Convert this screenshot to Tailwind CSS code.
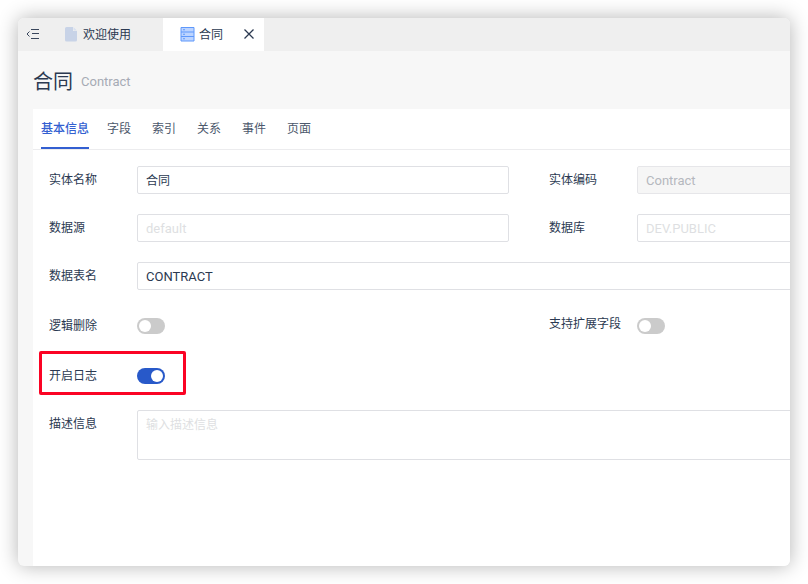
<!DOCTYPE html>
<html lang="zh-CN">
<head>
<meta charset="utf-8">
<title>合同</title>
<script src="https://cdn.jsdelivr.net/npm/@tailwindcss/browser@4"></script>
</head>
<body class="flex h-screen overflow-hidden bg-white p-[18px] font-['Roboto','Noto_Sans_CJK_SC',sans-serif] text-xs text-[#2b3951]">
<main class="flex min-w-0 flex-1 flex-col overflow-hidden rounded-md bg-[#f7f7f7] shadow-[0_0_20px_rgba(0,0,0,0.3)]">
  <header class="flex h-[33px] shrink-0 items-stretch bg-[#efefef]">
    <button aria-label="收起菜单" class="flex w-[30px] items-center pl-2">
      <svg class="h-[13px] w-[14px]" viewBox="0 0 14 13" fill="none" stroke="#39465c"><path d="M3.500 3.500 1 6l2.500 2.500M5 1.500h8M6 5.500h7M5 10.500h8"/></svg>
    </button>
    <button class="flex w-[115px] items-center gap-[6px] pl-[17px]">
      <svg class="h-[15px] w-3" viewBox="0 0 12 15"><path fill="#c8d3e7" d="M1.500 0H8v4h4v9a1.500 1.500 0 0 1-1.500 1.500h-9A1.500 1.500 0 0 1 0 13v-11.500A1.500 1.500 0 0 1 1.500 0z"/><path fill="#d9e1ef" d="M8.500 0 12 3.500H8.500z"/></svg>
      <span>欢迎使用</span>
    </button>
    <div class="flex w-[101px] items-center bg-white pl-[17px]">
      <button class="flex items-center gap-1">
        <svg class="h-[15px] w-[15px]" viewBox="0 0 15 15"><path fill="#bcd4ff" stroke="#5e98fb" d="M1 .5h13v13.500H1zM1 5h13M1 9.500h13"/><path fill="none" stroke="#5e98fb" d="M3 2.750h2M3 7.250h2M3 11.750h2"/></svg>
        <span>合同</span>
      </button>
      <button aria-label="关闭" class="ml-5">
        <svg class="h-[13px] w-3" viewBox="0 0 12 13" fill="none" stroke="#2b3951" stroke-width="1.300"><path d="m1.500 1.500 9 9m0-9-9 9"/></svg>
      </button>
    </div>
  </header>
  <div class="flex h-[58px] shrink-0 items-center gap-2 pt-1 pl-[15px]">
    <h1 class="text-xl">合同</h1>
    <span class="text-[13px] text-[#a6abb5]">Contract</span>
  </div>
  <section class="ml-[15px] flex-1 overflow-hidden bg-white">
    <nav class="flex h-[41px] items-stretch border-b border-[#ececee] pl-2 text-[#4c586c]">
      <button class="mr-[18px] border-b-2 border-[#335fd1] pt-[2px] font-medium text-[#335fd1]">基本信息</button>
      <button class="w-[45px] text-left">字段</button>
      <button class="w-[45px] text-left">索引</button>
      <button class="w-[45px] text-left">关系</button>
      <button class="w-[45px] text-left">事件</button>
      <button class="w-[45px] text-left">页面</button>
    </nav>
    <form class="grid min-w-[992px] grid-cols-2 gap-x-10 gap-y-5 p-4 leading-7">
      <div class="flex">
        <label for="name" class="w-[88px] shrink-0">实体名称</label>
        <input id="name" value="合同" class="h-7 min-w-0 flex-1 rounded-xs border border-[#dfe0e4] px-2 pt-[2px]">
      </div>
      <div class="flex">
        <label for="code" class="w-[88px] shrink-0">实体编码</label>
        <input id="code" value="Contract" disabled class="h-7 min-w-0 flex-1 rounded-xs border border-[#e6e6e9] bg-[#f6f6f6] px-2 pt-[2px] text-[13px] text-[#b5b8be]">
      </div>
      <div class="flex">
        <label for="source" class="w-[88px] shrink-0">数据源</label>
        <input id="source" placeholder="default" class="h-7 min-w-0 flex-1 rounded-xs border border-[#dfe0e4] px-2 pt-[2px] text-[13px] placeholder:text-[#dedfe2]">
      </div>
      <div class="flex">
        <label for="database" class="w-[88px] shrink-0">数据库</label>
        <input id="database" placeholder="DEV.PUBLIC" class="h-7 min-w-0 flex-1 rounded-xs border border-[#dfe0e4] px-2 pt-[2px] text-[13px] placeholder:text-[#dedfe2]">
      </div>
      <div class="col-span-2 flex">
        <label for="table" class="w-[88px] shrink-0">数据表名</label>
        <input id="table" value="CONTRACT" class="h-7 min-w-0 flex-1 rounded-xs border border-[#dfe0e4] px-2 pt-[2px] text-[13px]">
      </div>
      <div class="flex h-[30px] items-center pt-[2px]">
        <label for="soft-delete" class="w-[88px] shrink-0">逻辑删除</label>
        <input id="soft-delete" type="checkbox" role="switch" class="flex h-4 w-7 appearance-none items-center rounded-full bg-[#cbcbcb] p-[2px] before:h-3 before:w-3 before:rounded-full before:bg-white checked:justify-end checked:bg-[#2859c9]">
      </div>
      <div class="flex h-[30px] items-start">
        <label for="extension" class="w-[88px] shrink-0">支持扩展字段</label>
        <input id="extension" type="checkbox" role="switch" class="mt-2 flex h-4 w-7 appearance-none items-center rounded-full bg-[#cbcbcb] p-[2px] before:h-3 before:w-3 before:rounded-full before:bg-white checked:justify-end checked:bg-[#2859c9]">
      </div>
      <div class="relative col-span-2 flex h-[30px] items-center pt-[2px]">
        <label for="log" class="w-[88px] shrink-0">开启日志</label>
        <input id="log" type="checkbox" role="switch" checked class="flex h-4 w-7 appearance-none items-center rounded-full bg-[#cbcbcb] p-[2px] before:h-3 before:w-3 before:rounded-full before:bg-white checked:justify-end checked:bg-[#2859c9]">
        <span class="pointer-events-none absolute -top-[9px] -left-[10px] h-11 w-[147px] rounded-xs border-3 border-[#fb0324]"></span>
      </div>
      <div class="col-span-2 flex">
        <label for="description" class="w-[88px] shrink-0">描述信息</label>
        <textarea id="description" placeholder="输入描述信息" class="h-[50px] min-w-0 flex-1 resize-none rounded-xs border border-[#dfe0e4] px-2 placeholder:text-[#dedfe2]"></textarea>
      </div>
    </form>
  </section>
</main>
</body>
</html>
